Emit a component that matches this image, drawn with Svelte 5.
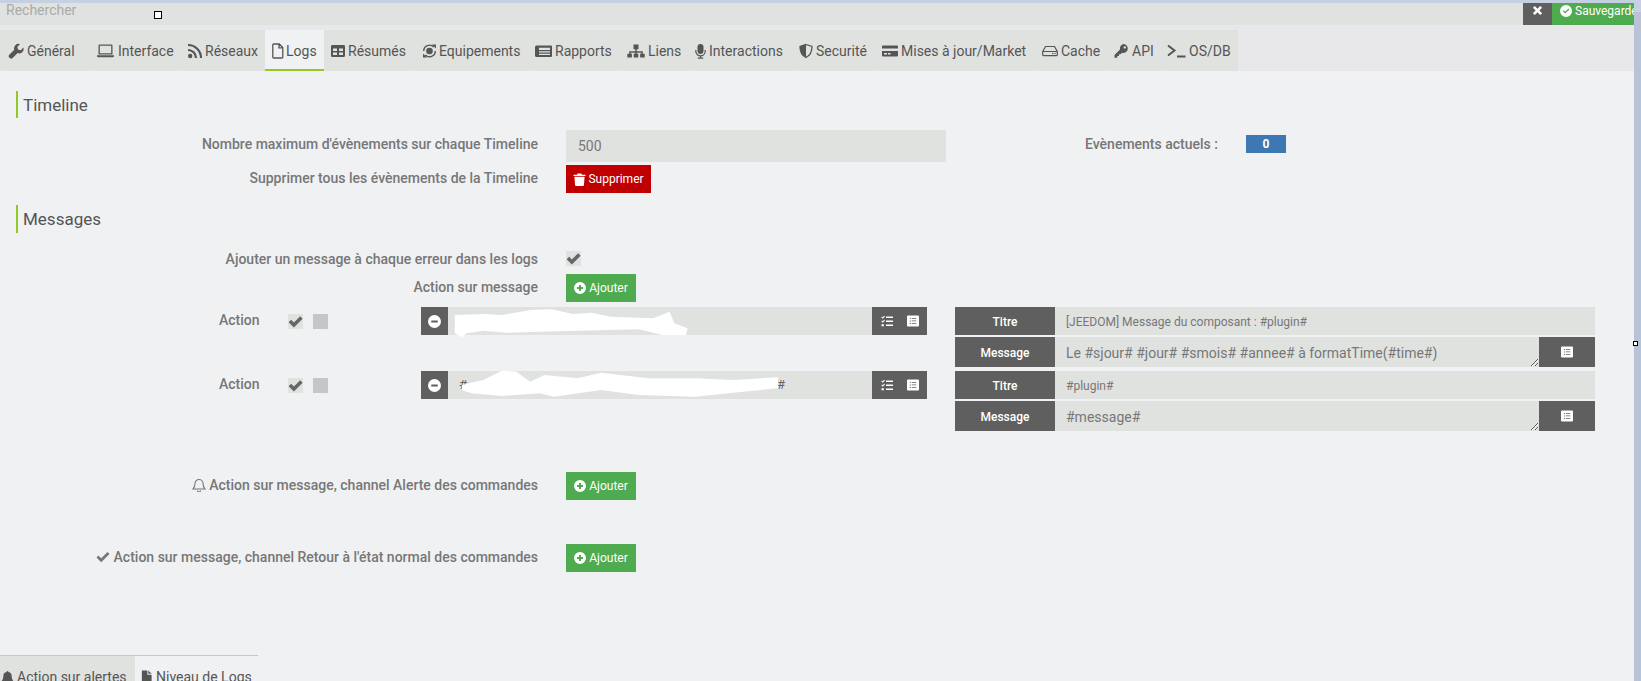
<script>
  const icons = {
    wrench: '<path transform="translate(1 0)" d="M15.400 4.600 12.800 7.200 10 6.600 9.400 3.800 12 1.200A4.400 4.400 0 0 0 6.300 6.800L1.300 11.800a1.900 1.900 0 0 0 0 2.700l.6.6a1.900 1.900 0 0 0 2.700 0l5-5A4.400 4.400 0 0 0 15.400 4.600Z"/>',
    laptop: '<path fill-rule="evenodd" d="M2.500 1.500h12a1 1 0 0 1 1 1v9h-14v-9a1 1 0 0 1 1-1Zm.3 1.300v7.400h11.400V2.800ZM0 12.300h17v.7a1.300 1.300 0 0 1-1.300 1.300H1.300A1.300 1.300 0 0 1 0 13Z"/>',
    rss: '<circle cx="2.200" cy="13" r="2.200"/><path fill="none" stroke="currentColor" stroke-width="2.200" d="M0 7a8 8 0 0 1 8 8M0 2a13 13 0 0 1 13 13"/>',
    file: '<path fill="none" stroke="currentColor" stroke-width="1.300" d="M1.700 1h5.500l3.600 3.600v9.500a.9.900 0 0 1-.9.900H1.700a.9.900 0 0 1-.9-.9V1.900a.9.900 0 0 1 .9-.9ZM7 1v3.800h3.800"/>',
    table: '<path fill-rule="evenodd" d="M1.300 2h11.400a1.300 1.300 0 0 1 1.300 1.300v9.400a1.300 1.300 0 0 1-1.300 1.300H1.300A1.300 1.300 0 0 1 0 12.700V3.300A1.300 1.300 0 0 1 1.300 2ZM2 5.500v2.500h4V5.500Zm6 0v2.500h4V5.500ZM2 9.500v2.500h4V9.500Zm6 0v2.500h4V9.500Z"/>',
    equip: '<circle cx="7.500" cy="8" r="3.300"/><path fill="none" stroke="currentColor" stroke-width="1.400" d="M1.700 8a5.800 5.800 0 0 1 10-4M13.300 8a5.800 5.800 0 0 1-10 4"/><path d="M10 1.500h4v4ZM5 14.500H1v-4Z"/>',
    news: '<path fill-rule="evenodd" d="M1.500 2.500H16a1 1 0 0 1 1 1v9.500a1 1 0 0 1-1 1H1.500A1.500 1.500 0 0 1 0 12.500v-8.500A1.500 1.500 0 0 1 1.500 2.500ZM4 4.700v2.300h11V4.700ZM4 8.200v1.300h11V8.200ZM4 10.700V12h11v-1.300Z"/>',
    sitemap: '<path d="M6.500 1.500h5v4.700h-1.700v2h6v2.600h-1.400V9.700H9.800v1.100H8.300V9.700H3.600v1.100H2.200V8.200h6.100v-2H6.500ZM.3 10.800h4.600v3.700H.3ZM6.700 10.800h4.600v3.700H6.700ZM13.100 10.800h4.600v3.700h-4.600Z"/>',
    mic: '<rect x="2.500" y="1" width="6" height="10" rx="3"/><path fill="none" stroke="currentColor" stroke-width="1.200" d="M.8 7v1.200a4.700 4.700 0 0 0 9.400 0V7M5.500 13v2M2.800 15.200h5.400"/>',
    shield: '<path fill="none" stroke="currentColor" stroke-width="1.300" d="M7 1.500 13 3.500c0 5-1.500 8.800-6 11-4.500-2.200-6-6-6-11Z"/><path d="M7 1.500v13C2.500 12.300 1 8.500 1 3.500Z"/>',
    card: '<path fill-rule="evenodd" d="M1 2.500h14a1 1 0 0 1 1 1v9a1 1 0 0 1-1 1H1a1 1 0 0 1-1-1v-9a1 1 0 0 1 1-1ZM0 5.500V8h16V5.500ZM2 10v1.500h3V10Zm4 0v1.500h2.500V10Z"/>',
    hdd: '<path fill="none" stroke="currentColor" stroke-width="1.200" d="M.7 8.500 3.500 3.500h9l2.800 5v3.200a1 1 0 0 1-1 1H1.700a1 1 0 0 1-1-1ZM.7 8.500h14.600"/><circle cx="13" cy="10.500" r=".7"/><circle cx="10.800" cy="10.500" r=".7"/>',
    key: '<path fill-rule="evenodd" d="M9.500 1A4.500 4.500 0 1 1 8 9.800L6.500 11.300H5V13H3.300v1.700H.5V12L6 6.500A4.500 4.500 0 0 1 9.500 1Zm1.300 2.200a1.200 1.200 0 1 0 0 2.400 1.200 1.200 0 0 0 0-2.400Z"/>',
    terminal: '<path fill="none" stroke="currentColor" stroke-width="2" d="M1 2.500 7.500 7.500 1 12.500"/><path d="M10 12.500h8.500v2H10Z"/>'
  };

  const tabs = [
    { label: 'Général', icon: 'wrench', box: 18 },
    { label: 'Interface', icon: 'laptop', box: 19 },
    { label: 'Réseaux', icon: 'rss', box: 15 },
    { label: 'Logs', icon: 'file', box: 12, active: true },
    { label: 'Résumés', icon: 'table', box: 15 },
    { label: 'Equipements', icon: 'equip', box: 15 },
    { label: 'Rapports', icon: 'news', box: 18 },
    { label: 'Liens', icon: 'sitemap', box: 19 },
    { label: 'Interactions', icon: 'mic', box: 12 },
    { label: 'Securité', icon: 'shield', box: 15 },
    { label: 'Mises à jour/Market', icon: 'card', box: 17 },
    { label: 'Cache', icon: 'hdd', box: 17 },
    { label: 'API', icon: 'key', box: 16 },
    { label: 'OS/DB', icon: 'terminal', box: 20 }
  ];
</script>

{#snippet plus()}
  <svg class="btn-ic" viewBox="0 0 12 12"><path fill-rule="evenodd" d="M6 0a6 6 0 1 1 0 12A6 6 0 0 1 6 0Zm-1 3v2H3v2h2v2h2V7h2V5H7V3Z" /></svg>
{/snippet}

{#snippet check()}
  <svg class="tick" viewBox="1 1.500 12 11"><path d="M1.500 7.500 3.500 5.500 5.700 7.700 10.700 2.700 12.700 4.700 5.700 11.700Z" /></svg>
{/snippet}

{#snippet listAlt()}
  <svg class="mini" viewBox="0 0 12 12"><path fill-rule="evenodd" d="M1 .5h10a1 1 0 0 1 1 1v9a1 1 0 0 1-1 1H1a1 1 0 0 1-1-1v-9a1 1 0 0 1 1-1ZM2.800 3v1h1V3Zm2 0v.8h4.500V3Zm-2 2.500v1h1v-1Zm2 0v.8h4.500v-.8Zm-2 2.500v1h1V8Zm2 0v.8h4.500V8Z" /></svg>
{/snippet}

{#snippet tasks()}
  <svg class="mini" viewBox="0 0 12 12"><path d="M.3 2.300 1 1.600l.7.7L3.300.7l.7.7-2.300 2.300ZM.3 6.300 1 5.600l.7.7 1.600-1.600.7.700-2.300 2.300ZM5 1.500h7v1.400H5ZM5 5.500h7v1.400H5ZM.5 9.300h2.400v2H.5ZM5 9.500h7v1.400H5Z" /></svg>
{/snippet}

{#snippet minus()}
  <svg class="mini round" viewBox="0 0 12 12"><path fill-rule="evenodd" d="M6 0a6 6 0 1 1 0 12A6 6 0 0 1 6 0ZM3 5v2h6V5Z" /></svg>
{/snippet}

<div class="frame">
  <div class="window">
    <div class="searchbar">
      <input class="search" placeholder="Rechercher" />
      <button class="close" aria-label="Fermer">
        <svg viewBox="0 0 12 12"><path d="M3 1 6 4 9 1 11 3 8 6 11 9 9 11 6 8 3 11 1 9 4 6 1 3Z" /></svg>
      </button>
      <button class="save">
        <svg viewBox="0 0 12 12"><path fill-rule="evenodd" d="M6 0a6 6 0 1 1 0 12A6 6 0 0 1 6 0ZM2.800 6.200 5.200 8.600 9.400 4.400 8.500 3.500 5.200 6.800 3.700 5.300Z" /></svg>
        Sauvegarder
      </button>
    </div>

    <nav class="nav">
      <ul class="tabs">
        {#each tabs as tab}
          <li class="tab" class:active={tab.active}>
            <svg width={tab.box} height="16" viewBox="0 0 {tab.box} 16" fill="currentColor">{@html icons[tab.icon]}</svg>
            <span>{tab.label}</span>
          </li>
        {/each}
      </ul>
    </nav>

    <h3 class="legend first">Timeline</h3>

    <div class="row r-max">
      <span class="label">Nombre maximum d'évènements sur chaque Timeline</span>
      <input class="field wide" value="500" />
      <span class="label current">Evènements actuels :</span>
      <span class="badge">0</span>
    </div>
    <div class="row r-del">
      <span class="label">Supprimer tous les évènements de la Timeline</span>
      <button class="btn red">
        <svg class="btn-ic trash" viewBox="0 0 12 12"><path d="M4.200.5h3.600l.5 1H11.500v1.300H.5V1.500H3.700ZM1.300 3.500h9.400l-.6 7.500a1 1 0 0 1-1 1H2.900a1 1 0 0 1-1-1Z" /></svg>
        Supprimer
      </button>
    </div>

    <h3 class="legend second">Messages</h3>

    <div class="row r-check">
      <span class="label">Ajouter un message à chaque erreur dans les logs</span>
      <span class="box">{@render check()}</span>
    </div>
    <div class="row r-add">
      <span class="label">Action sur message</span>
      <button class="btn green">{@render plus()} Ajouter</button>
    </div>

    <div class="action">
      <span class="action-label">Action</span>
      <span class="box">{@render check()}</span>
      <span class="box grey"></span>
      <div class="group">
        <span class="addon narrow">{@render minus()}</span>
        <div class="cmd">
          <svg class="scribble" viewBox="0 0 340 32"><path d="M6.800 8 35.200 7 54 8 82.300 3 103.600 2.300 124.800 7 143.700 5.700 162.600 9.700 205 11.300 221.600 4.700 226.300 16.300 239.500 21.300 238 28 214.500 28 190.900 22.300 129.500 23.700 91.800 24.700 58.700 25.700 35 23.700 18.600 26.300 13.900 30.300 6.800 26.300Z" /></svg>
        </div>
        <span class="addon tools">{@render tasks()}{@render listAlt()}</span>
      </div>
      <div class="options">
        <div class="opt title">
          <span class="opt-label">Titre</span>
          <input class="opt-input small" value="[JEEDOM] Message du composant : #plugin#" />
        </div>
        <div class="opt msg">
          <span class="opt-label">Message</span>
          <textarea class="opt-text">Le #sjour# #jour# #smois# #annee# à formatTime(#time#)</textarea>
          <span class="addon side">{@render listAlt()}</span>
        </div>
      </div>
    </div>

    <div class="action next">
      <span class="action-label">Action</span>
      <span class="box">{@render check()}</span>
      <span class="box grey"></span>
      <div class="group">
        <span class="addon narrow">{@render minus()}</span>
        <div class="cmd hashes">
          <span>#</span><span>#</span>
          <svg class="scribble" viewBox="0 0 340 32"><path d="M13.900 14 35.200 9 54 -.3 68.200 .7 82.300 10.700 96.500 4 129.500 7.300 153.100 1.700 200.300 7.300 247.500 7.300 285.300 9 330.100 6.300 330.100 17.300 294.700 20.700 247.500 25.700 190.900 24 153.100 19 105.900 25.700 91.800 22.300 54 25 23.400 22.300 13.900 19Z" /></svg>
        </div>
        <span class="addon tools">{@render tasks()}{@render listAlt()}</span>
      </div>
      <div class="options">
        <div class="opt title">
          <span class="opt-label">Titre</span>
          <input class="opt-input small" value="#plugin#" />
        </div>
        <div class="opt msg">
          <span class="opt-label">Message</span>
          <textarea class="opt-text">#message#</textarea>
          <span class="addon side">{@render listAlt()}</span>
        </div>
      </div>
    </div>

    <div class="row r-alert">
      <span class="label">
        <svg class="lab-ic" viewBox="0 0 14 14"><path fill="none" stroke="currentColor" stroke-width="1.100" d="M7 1.500a4 4 0 0 1 4 4c0 3 1 4.500 2 5.500H1c1-1 2-2.500 2-5.500a4 4 0 0 1 4-4ZM5.500 12.500a1.500 1.500 0 0 0 3 0" /></svg>
        Action sur message, channel Alerte des commandes
      </span>
      <button class="btn green">{@render plus()} Ajouter</button>
    </div>
    <div class="row r-back">
      <span class="label">
        <svg class="lab-ic" viewBox="0 0 14 14"><path fill="currentColor" d="M.5 7.500 2.500 5.500 5.200 8.200 11.500 2 13.500 4 5.200 12.300Z" /></svg>
        Action sur message, channel Retour à l'état normal des commandes
      </span>
      <button class="btn green">{@render plus()} Ajouter</button>
    </div>

    <ul class="subtabs">
      <li class="sub on">
        <svg viewBox="0 0 14 14"><path d="M7 .5a1 1 0 0 1 1 1 4.500 4.500 0 0 1 3.500 4.500c0 3 1 4.500 2 5.500H.5c1-1 2-2.500 2-5.500A4.500 4.500 0 0 1 6 1.500a1 1 0 0 1 1-1Z" /></svg>
        Action sur alertes
      </li>
      <li class="sub">
        <svg viewBox="0 0 14 14"><path d="M2 0h6v4.500h4.500V14H2ZM9 0l3.500 3.500H9Z" /></svg>
        Niveau de Logs
      </li>
    </ul>

    <span class="handle top"></span>
    <span class="handle side-h"></span>
  </div>
  <div class="edge"></div>
</div>

<style>
  :global(body) {
    margin: 0;
    background: #c5d0e3;
  }

  .frame {
    display: flex;
    height: 678px;
    padding-top: 3px;
    overflow: hidden;
    font-family: Roboto, sans-serif;
    font-size: 14px;
    color: #555;
  }

  .window {
    position: relative;
    width: 1634px;
    flex: none;
    background: #eff1f3;
  }

  .edge {
    flex: 1;
    margin-top: 9px;
    background: #b8c3d8;
  }

  button {
    border: 0;
    padding: 0;
    font-family: inherit;
    color: #fff;
  }

  .searchbar {
    display: flex;
    height: 22px;
    background: #e0e2e0;
  }

  .search {
    flex: 1;
    border: 0;
    outline: 0;
    background: none;
    padding: 0 6px 8px;
    font: 14px Roboto, sans-serif;
  }

  .search::placeholder {
    color: #aaa;
  }

  .close {
    width: 29px;
    background: #5f5f5f;
    padding-bottom: 9px;
  }

  .close svg {
    display: block;
    width: 11px;
    height: 11px;
    margin: 1px auto 0;
    fill: #fff;
  }

  .save {
    display: flex;
    gap: 3px;
    width: 82px;
    padding: 1px 0 0 8px;
    background: #4fab4f;
    font-size: 12px;
    white-space: nowrap;
    overflow: hidden;
  }

  .save svg {
    flex: none;
    width: 12px;
    height: 12px;
    margin-top: 1px;
    fill: #fff;
  }

  .nav {
    height: 41px;
    padding-top: 5px;
    background: #e8e8ea;
  }

  .tabs {
    display: grid;
    grid-template-columns: 90px 91px 84px 59px 91px 113px 92px 68px 104px 83px 160px 72px 53px 78px;
    width: 1238px;
    height: 41px;
    margin: 0;
    padding: 0;
    list-style: none;
    background: #e0e2e0;
  }

  .tab {
    display: flex;
    align-items: center;
    gap: 2px;
    padding-left: 7px;
    white-space: nowrap;
    background: linear-gradient(#eff1f3, #eff1f3) left bottom / 1px 1px no-repeat;
  }

  .tab svg {
    flex: none;
  }

  .tab.active {
    background: #eff1f3;
    box-shadow: inset 0 -2px 0 #93c927;
  }

  .legend {
    height: 28px;
    margin: 0 0 0 16px;
    padding-left: 5px;
    border-left: 2px solid #93c927;
    font-size: 17px;
    font-weight: 400;
    line-height: 28px;
  }

  .legend.first {
    height: 27px;
    margin-top: 20px;
  }

  .legend.second {
    margin-top: 12px;
  }

  .row {
    display: flex;
    align-items: center;
  }

  .label {
    flex: none;
    width: 538px;
    margin-right: 28px;
    text-align: right;
    color: #777;
    font-weight: 500;
  }

  .r-max {
    height: 32px;
    margin-top: 12px;
  }

  .r-max > .label:first-child {
    margin-top: -5px;
  }

  .r-del {
    height: 28px;
    margin-top: 3px;
  }

  .r-del .label {
    margin-top: -3px;
  }

  .r-check {
    height: 15px;
    margin-top: 18px;
  }

  .r-add {
    height: 28px;
    margin-top: 8px;
  }

  .r-add .label {
    margin-top: -3px;
  }

  .r-alert {
    height: 28px;
    margin-top: 41px;
  }

  .r-back {
    height: 28px;
    margin-top: 44px;
  }

  .r-alert .label,
  .r-back .label {
    margin-top: -3px;
  }

  .lab-ic {
    width: 14px;
    height: 14px;
    vertical-align: -2px;
  }

  .field {
    box-sizing: border-box;
    border: 0;
    outline: 0;
    background: #e0e2e0;
    color: #777;
    font: 14px Roboto, sans-serif;
  }

  .wide {
    width: 380px;
    height: 32px;
    padding: 0 12px;
  }

  .label.current {
    width: 134px;
    margin: -5px 0 0 139px;
    text-align: left;
  }

  .badge {
    width: 40px;
    height: 18px;
    margin: -4px 0 0 27px;
    background: #3e78b2;
    color: #fff;
    font-size: 12px;
    font-weight: 700;
    line-height: 18px;
    text-align: center;
  }

  .btn {
    display: flex;
    align-items: center;
    justify-content: center;
    gap: 3px;
    height: 28px;
    font-size: 12px;
  }

  .btn.red {
    gap: 2px;
    width: 85px;
    background: #c00000;
  }

  .btn.green {
    width: 70px;
    background: #4fab4f;
  }

  .btn-ic {
    width: 12px;
    height: 12px;
    fill: #fff;
  }

  .btn-ic.trash {
    width: 13px;
    height: 13px;
  }

  .box {
    display: block;
    width: 15px;
    height: 15px;
    background: #e0e2e0;
  }

  .box.grey {
    background: #c6c6c6;
  }

  .tick {
    display: block;
    width: 15px;
    height: 15px;
    fill: #666;
  }

  .action {
    display: grid;
    grid-template-columns: 288px 25px 108px 506px 668px;
    align-items: start;
    margin-top: 5px;
  }

  .action.next {
    margin-top: 4px;
  }

  .action .box {
    margin-top: 7px;
  }

  .action-label {
    padding-left: 219px;
    color: #777;
    font-weight: 500;
    line-height: 26px;
  }

  .group {
    display: flex;
    height: 28px;
    background: #e0e2e0;
  }

  .options {
    margin-left: 28px;
  }

  .addon {
    display: flex;
    align-items: center;
    justify-content: center;
    background: #5f5f5f;
  }

  .narrow {
    width: 27px;
  }

  .tools {
    width: 55px;
    gap: 14px;
    margin-left: auto;
  }

  .side {
    flex: none;
    width: 56px;
  }

  .mini {
    width: 12px;
    height: 12px;
    fill: #fff;
  }

  .round {
    width: 13px;
    height: 13px;
  }

  .cmd {
    position: relative;
    width: 424px;
    font-size: 13px;
    line-height: 28px;
    color: #666;
  }

  .hashes {
    display: flex;
    justify-content: space-between;
    box-sizing: border-box;
    padding: 0 87px 0 11px;
  }

  .scribble {
    position: absolute;
    top: 0;
    left: 0;
    width: 340px;
    height: 32px;
    overflow: visible;
    fill: #fff;
  }

  .opt {
    display: flex;
    background: #e0e2e0;
  }

  .opt.title {
    height: 28px;
  }

  .opt.msg {
    height: 30px;
    margin-top: 2px;
  }

  .opt-label {
    flex: none;
    width: 100px;
    background: #5f5f5f;
    color: #fff;
    font-size: 12px;
    font-weight: 500;
    text-align: center;
    line-height: 30px;
  }

  .msg .opt-label {
    line-height: 32px;
  }

  .opt-input,
  .opt-text {
    flex: 1;
    min-width: 0;
    box-sizing: border-box;
    border: 0;
    outline: 0;
    background: none;
    padding: 0 11px;
    color: #777;
    font: 14px Roboto, sans-serif;
  }

  .opt-input.small {
    padding-top: 1px;
    font-size: 12px;
  }

  .opt-text {
    height: 30px;
    padding-top: 8px;
    line-height: 16px;
  }

  .subtabs {
    display: flex;
    width: 258px;
    height: 40px;
    margin: 83px 0 0;
    padding: 0;
    list-style: none;
    border-top: 1px solid #c8c8c8;
  }

  .sub {
    display: flex;
    flex: none;
    align-items: flex-start;
    gap: 3px;
    padding: 13px 0 0 5px;
    white-space: nowrap;
  }

  .sub.on {
    width: 135px;
    box-sizing: border-box;
    padding-left: 1px;
    background: #e0e2e0;
  }

  .sub svg {
    flex: none;
    width: 13px;
    height: 14px;
    margin-top: 1px;
    fill: #555;
  }

  .handle {
    position: absolute;
    box-sizing: border-box;
    width: 8px;
    height: 8px;
    border: 1px solid #000;
    background: #fff;
  }

  .handle.top {
    top: 8px;
    left: 154px;
  }

  .handle.side-h {
    top: 338px;
    left: 1633px;
    width: 5px;
    height: 5px;
  }
</style>
